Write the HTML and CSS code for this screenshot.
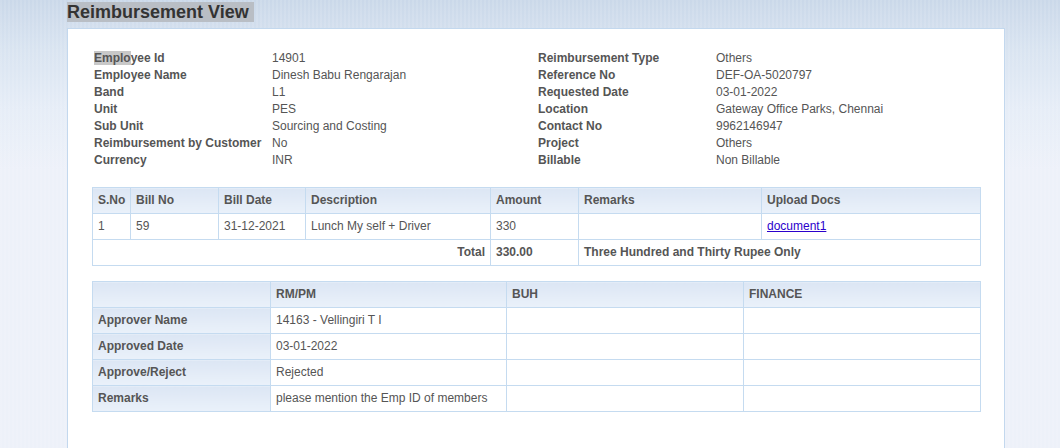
FILE: index.html
```html
<!DOCTYPE html>
<html>
<head>
<meta charset="utf-8">
<link rel="stylesheet" href="styles.css">
</head>
<body>
<div class="page">
  <h2 class="title">Reimbursement View&nbsp;</h2>
  <div class="panel">
    <div class="info">
      <div class="lbl"><span class="sel">Emplo</span>yee Id</div><div class="val">14901</div>
      <div class="lbl">Reimbursement Type</div><div class="val">Others</div>
      <div class="lbl">Employee Name</div><div class="val">Dinesh Babu Rengarajan</div>
      <div class="lbl">Reference No</div><div class="val">DEF-OA-5020797</div>
      <div class="lbl">Band</div><div class="val">L1</div>
      <div class="lbl">Requested Date</div><div class="val">03-01-2022</div>
      <div class="lbl">Unit</div><div class="val">PES</div>
      <div class="lbl">Location</div><div class="val">Gateway Office Parks, Chennai</div>
      <div class="lbl">Sub Unit</div><div class="val">Sourcing and Costing</div>
      <div class="lbl">Contact No</div><div class="val">9962146947</div>
      <div class="lbl">Reimbursement by Customer</div><div class="val">No</div>
      <div class="lbl">Project</div><div class="val">Others</div>
      <div class="lbl">Currency</div><div class="val">INR</div>
      <div class="lbl">Billable</div><div class="val">Non Billable</div>
    </div>

    <table class="grid bills">
      <colgroup>
        <col style="width:38px"><col style="width:88px"><col style="width:87px"><col style="width:185px"><col style="width:88px"><col style="width:183px"><col>
      </colgroup>
      <thead>
        <tr><th>S.No</th><th>Bill No</th><th>Bill Date</th><th>Description</th><th>Amount</th><th>Remarks</th><th>Upload Docs</th></tr>
      </thead>
      <tbody>
        <tr><td>1</td><td>59</td><td>31-12-2021</td><td>Lunch My self + Driver</td><td>330</td><td></td><td><a href="#" class="doc">document1</a></td></tr>
        <tr><td colspan="4" class="total">Total</td><td class="b">330.00</td><td colspan="2" class="b">Three Hundred and Thirty Rupee Only</td></tr>
      </tbody>
    </table>

    <table class="grid approvals">
      <colgroup>
        <col style="width:178px"><col style="width:236px"><col style="width:237px"><col>
      </colgroup>
      <thead>
        <tr><th></th><th>RM/PM</th><th>BUH</th><th>FINANCE</th></tr>
      </thead>
      <tbody>
        <tr><th>Approver Name</th><td>14163 - Vellingiri T I</td><td></td><td></td></tr>
        <tr><th>Approved Date</th><td>03-01-2022</td><td></td><td></td></tr>
        <tr><th>Approve/Reject</th><td>Rejected</td><td></td><td></td></tr>
        <tr><th>Remarks</th><td>please mention the Emp ID of members</td><td></td><td></td></tr>
      </tbody>
    </table>
  </div>
</div>
</body>
</html>
```

FILE: styles.css
```css
html, body {
  margin: 0;
  padding: 0;
  height: 100%;
}
body {
  font-family: "Liberation Sans", Arial, sans-serif;
  font-size: 12px;
  color: #555;
  background:
    repeating-linear-gradient(90deg, rgba(255,255,255,0.10) 0 2px, rgba(255,255,255,0) 2px 4px),
    linear-gradient(180deg, #cad8e9 0, #d9e4f1 50px, #e6edf7 110px, #edf1f9 170px);
  background-color: #edf1f9;
  overflow: hidden;
}
.page {
  padding: 2px 0 0 67px;
}
.title {
  display: inline-block;
  margin: 0;
  font-size: 18px;
  line-height: 20px;
  font-weight: bold;
  color: #333;
  background: #b9bec5;
}
.panel {
  margin-top: 6px;
  width: 938px;
  min-height: 440px;
  background: #fff;
  border: 1px solid #c3d8ee;
  padding: 21px 0 0 24px;
  box-sizing: border-box;
}
.info {
  display: grid;
  grid-template-columns: 178px 266px 178px auto;
  grid-auto-rows: 17px;
  line-height: 17px;
  padding-left: 2px;
}
.lbl {
  font-weight: bold;
  color: #555;
}
.val {
  color: #555;
}
.sel {
  background: #c8c8c8;
}
.grid {
  border-collapse: collapse;
  width: 889px;
  table-layout: fixed;
  border: 1px solid #c5dbf0;
}
.grid th, .grid td {
  border: 1px solid #c5dbf0;
  height: 23px;
  padding: 0 5px 2px;
  text-align: left;
  vertical-align: middle;
  font-size: 12px;
  color: #555;
  white-space: nowrap;
  overflow: hidden;
}
.grid th {
  font-weight: bold;
  background: linear-gradient(180deg, #dce6f4 0%, #eaf1fa 100%);
}
.bills {
  margin-top: 18px;
}
.approvals {
  margin-top: 15px;
}
.total {
  text-align: right !important;
  font-weight: bold;
}
.b {
  font-weight: bold;
}
.doc {
  color: #2a00cc;
  text-decoration: underline;
}
```
